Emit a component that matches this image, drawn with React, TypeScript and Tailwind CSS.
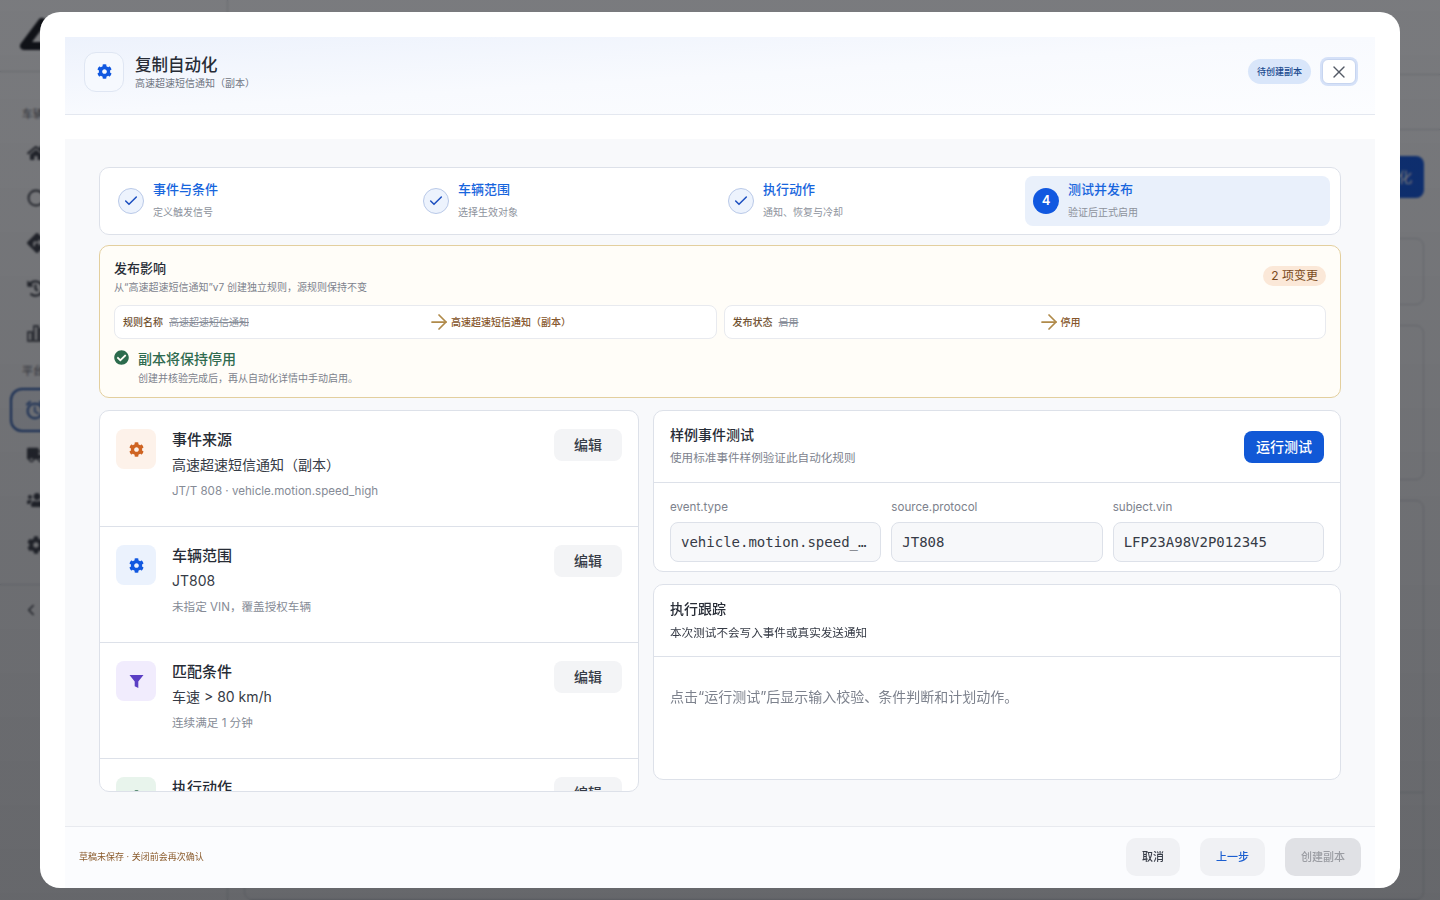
import { FaCheckCircle, FaCog, FaDirections, FaHistory, FaHome, FaTruck, FaUsers } from "react-icons/fa";
import { MdAlarm } from "react-icons/md";
import { ArrowRight, Check, ChevronLeft, Circle, X } from "lucide-react";
import type { ReactNode } from "react";

const fontSans = "font-['Inter','Noto_Sans_CJK_SC',sans-serif]";

const FilterIcon = () => (
  <svg width="15" height="15" viewBox="0 0 15 15" fill="#5b3fc4">
    <path d="M0.5 1h14L9.3 7.6V14L5.7 12.2V7.6Z" />
  </svg>
);

const steps = [
  { title: "事件与条件", sub: "定义触发信号" },
  { title: "车辆范围", sub: "选择生效对象" },
  { title: "执行动作", sub: "通知、恢复与冷却" },
];

const items = [
  {
    title: "事件来源",
    value: "高速超速短信通知（副本）",
    sub: "JT/T 808 · vehicle.motion.speed_high",
    box: "bg-[#fdf2ea]",
    icon: <FaCog className="size-[15px] text-[#cf6422]" />,
  },
  {
    title: "车辆范围",
    value: "JT808",
    sub: "未指定 VIN，覆盖授权车辆",
    box: "bg-[#ebf2fd]",
    icon: <FaCog className="size-[15px] text-[#1158e0]" />,
  },
  {
    title: "匹配条件",
    value: "车速 > 80 km/h",
    sub: "连续满足 1 分钟",
    box: "bg-[#f1ecfd]",
    icon: <FilterIcon />,
  },
  {
    title: "执行动作",
    box: "bg-[#e8f4ec]",
    icon: <FaCog className="size-[15px] text-[#2f6b4f]" />,
  },
];

const fields = [
  { label: "event.type", value: "vehicle.motion.speed_high" },
  { label: "source.protocol", value: "JT808" },
  { label: "subject.vin", value: "LFP23A98V2P012345" },
];

function ChangeRow({ label, from, to }: { label: string; from: string; to: string }) {
  return (
    <div className="flex h-[34px] items-center rounded-lg border border-[#e8eaef] bg-white pl-2 text-[10px]">
      <div className="flex w-[304px] items-center gap-1.5">
        <span className="font-medium text-[#6f5030]">{label}</span>
        <span className="text-[#858b97] line-through">{from}</span>
      </div>
      <ArrowRight className="size-6 text-[#b08a4a]" strokeWidth={1.75} />
      <span className="font-medium text-[#85552a]">{to}</span>
    </div>
  );
}

function RailIcon({ children }: { children: ReactNode }) {
  return <div className="flex h-[45px] items-center pl-[27px] text-[#3c3f47]">{children}</div>;
}

export default function App() {
  return (
    <div className={`${fontSans} relative h-[900px] w-[1440px] overflow-hidden bg-white`}>
      {/* page behind the dialog */}
      <div className="flex h-full">
        <aside className="flex w-[228px] flex-col border-r border-[#d8dade]">
          <div className="flex h-[72px] items-center border-b border-[#d8dade] pl-5">
            <svg width="60" height="36" viewBox="0 0 60 36" fill="none">
              <path d="M22 4 L4 28 H40" stroke="#15171c" strokeWidth="8" strokeLinejoin="round" strokeLinecap="round" />
            </svg>
          </div>
          <div className="mt-[34px] pl-[22px] text-[11px] text-[#5d6068]">车辆</div>
          <div className="mt-2">
            <RailIcon><FaHome className="size-[18px]" /></RailIcon>
            <RailIcon><Circle className="size-[18px]" strokeWidth={2.5} /></RailIcon>
            <RailIcon><FaDirections className="size-5" /></RailIcon>
            <RailIcon><FaHistory className="size-[17px]" /></RailIcon>
            <RailIcon>
              <svg width="18" height="18" viewBox="0 0 18 18" fill="none" stroke="currentColor" strokeWidth="1.6">
                <rect x="1" y="8" width="4" height="9" />
                <rect x="7" y="2" width="4" height="15" />
                <rect x="13" y="5" width="4" height="12" />
              </svg>
            </RailIcon>
          </div>
          <div className="mt-[7px] pl-[22px] text-[11px] text-[#5d6068]">平台</div>
          <div className="ml-[10px] mt-[9px] flex h-[44px] w-[200px] shrink-0 items-center rounded-xl border-2 border-[#1c4fa8] bg-[#1c4fa8]/5 pl-[12px] text-[#1c4fa8]">
            <MdAlarm className="size-[22px]" />
          </div>
          <RailIcon><FaTruck className="size-[18px]" /></RailIcon>
          <RailIcon><FaUsers className="size-5" /></RailIcon>
          <RailIcon><FaCog className="size-[18px]" /></RailIcon>
          <div className="mt-[17px] flex items-center border-t border-[#d8dade] pl-[22px] pt-4 text-[#3c3f47]">
            <ChevronLeft className="size-[18px]" />
          </div>
        </aside>
        <main className="flex-1">
          <div className="h-[75px] border-b border-[#d8dade]" />
          <div className="h-[55px] border-b border-[#d8dade]" />
          <div className="flex flex-col gap-5 px-4 pt-[26px]">
            <div className="mb-[20px] flex justify-end">
              <div className="flex h-[42px] w-[110px] items-center justify-end rounded-lg bg-[#1158e0] pr-3 text-sm text-white">
                化
              </div>
            </div>
            <div className="h-[67px] rounded-lg border border-[#d8dade]" />
            <div className="h-[155px] rounded-lg border border-[#d8dade]" />
            <div className="h-[400px] rounded-lg border border-[#d8dade] pt-[291px]">
              <div className="border-t border-[#d8dade]" />
            </div>
          </div>
        </main>
      </div>

      {/* overlay */}
      <div className="absolute inset-0 bg-gradient-to-b from-[#0c0e14]/55 to-[#0c0e14]/63 backdrop-blur-[1px]" />

      {/* dialog */}
      <div className="absolute left-[40px] top-[12px] flex h-[876px] w-[1360px] flex-col overflow-hidden rounded-[20px] bg-white px-[25px] pt-[25px]">
        <header className="flex h-[78px] shrink-0 items-center justify-between border-b border-[#e4e8f0] bg-gradient-to-br from-[#edf2fc] via-[#f8fafe] to-[#fcfdff] pb-2 pl-[19px] pr-[19px]">
          <div className="flex items-center gap-[11px]">
            <div className="flex size-10 items-center justify-center rounded-xl border border-[#dfe6f3] bg-[#f6f9fe]">
              <FaCog className="size-[15px] text-[#1158e0]" />
            </div>
            <div>
              <div className="pt-[2px] text-[16.5px] font-medium leading-[23px] text-[#272c36]">复制自动化</div>
              <div className="-mt-[2px] text-[10px] leading-[16px] text-[#6f7582]">高速超速短信通知（副本）</div>
            </div>
          </div>
          <div className="flex items-center gap-[11px]">
            <span className="flex h-[25px] items-center rounded-full bg-[#d9e6fa] px-[9px] text-[9px] font-medium text-[#1a4a8f]">
              待创建副本
            </span>
            <button className="flex h-[25px] w-[34px] items-center justify-center rounded-md border border-[#c7d5f0] bg-white text-[#545a66] ring-2 ring-[#d5e1f8]">
              <X className="size-5" strokeWidth={1.6} />
            </button>
          </div>
        </header>

        <div className="h-6 shrink-0" />

        <div className="flex min-h-0 flex-1 flex-col gap-[10px] bg-[#f8f9fb] px-[34px] pt-[28px]">
          {/* stepper */}
          <div className="grid h-[68px] shrink-0 grid-cols-[305px_305px_305px_307px] rounded-[10px] border border-[#dde1e9] bg-white p-2">
            {steps.map((s) => (
              <div key={s.title} className="flex items-center gap-[9px] rounded-lg pl-[10px]">
                <div className="flex size-[26px] items-center justify-center rounded-full border border-[#b9c9e8] bg-[#edf3fd] text-[#1c4fc0]">
                  <Check className="size-4" strokeWidth={2.25} />
                </div>
                <div className="pb-[5px]">
                  <div className="text-[13px] font-medium leading-5 text-[#1765dd]">{s.title}</div>
                  <div className="mt-[6px] text-[10px] leading-[14px] text-[#8d929c]">{s.sub}</div>
                </div>
              </div>
            ))}
            <div className="ml-[2px] flex items-center gap-[9px] rounded-lg bg-[#e9f0fb] pl-2">
              <div className="flex size-[26px] items-center justify-center rounded-full bg-[#1158e0] text-[13px] font-semibold text-white">
                4
              </div>
              <div className="pb-[5px]">
                <div className="text-[13px] font-medium leading-5 text-[#1765dd]">测试并发布</div>
                <div className="mt-[6px] text-[10px] leading-[14px] text-[#8d929c]">验证后正式启用</div>
              </div>
            </div>
          </div>

          {/* publish impact */}
          <div className="h-[153px] shrink-0 rounded-[10px] border border-[#e3cf9e] bg-[#fffdf8] px-[14px] pt-[13px]">
            <div className="flex items-start justify-between">
              <div>
                <div className="text-[13px] font-medium leading-[18px] text-[#272c36]">发布影响</div>
                <div className="mt-[2px] text-[10px] leading-[16px] text-[#7d828d]">
                  从“高速超速短信通知”v7 创建独立规则，源规则保持不变
                </div>
              </div>
              <span className="mt-[7px] flex h-5 items-center rounded-full bg-[#fbe8d8] px-2 text-[12px] text-[#7a4a20]">
                2 项变更
              </span>
            </div>
            <div className="mt-[10px] grid grid-cols-2 gap-[7px]">
              <ChangeRow label="规则名称" from="高速超速短信通知" to="高速超速短信通知（副本）" />
              <ChangeRow label="发布状态" from="启用" to="停用" />
            </div>
            <div className="mt-[10px] flex gap-[9px]">
              <FaCheckCircle className="mt-[1px] size-[15px] text-[#2c6b4d]" />
              <div>
                <div className="text-[14px] font-medium leading-5 text-[#2f6b4f]">副本将保持停用</div>
                <div className="mt-[1px] text-[10px] leading-[16px] text-[#7d828d]">
                  创建并核验完成后，再从自动化详情中手动启用。
                </div>
              </div>
            </div>
          </div>

          {/* checks + test */}
          <div className="mt-[2px] flex gap-[14px]">
            <div className="h-[382px] w-[540px] shrink-0 overflow-hidden rounded-[10px] border border-[#dde1e9] bg-white">
              {items.map((it) => (
                <div key={it.title} className="flex h-[116px] shrink-0 gap-4 border-b border-[#dde1e9] px-4 pt-[18px]">
                  <div className={`flex size-10 shrink-0 items-center justify-center rounded-lg ${it.box}`}>{it.icon}</div>
                  <div className="flex-1">
                    <div className="pt-[1px] text-[15px] font-medium leading-5 text-[#272c36]">{it.title}</div>
                    {it.value && <div className="mt-[5px] text-[14px] leading-5 text-[#363b46]">{it.value}</div>}
                    {it.sub && <div className="mt-[6px] text-[11.6px] leading-5 text-[#868b96]">{it.sub}</div>}
                  </div>
                  <button className="h-8 w-[68px] rounded-lg bg-[#f3f4f6] pb-[2px] text-[14px] font-medium text-[#363b46]">
                    编辑
                  </button>
                </div>
              ))}
            </div>

            <div className="flex min-w-0 flex-1 flex-col gap-3">
              <div className="h-[162px] rounded-[10px] border border-[#dde1e9] bg-white">
                <div className="flex h-[72px] items-center justify-between border-b border-[#dde1e9] px-4">
                  <div className="pb-[3px]">
                    <div className="pt-[1px] text-[14px] font-medium leading-5 text-[#272c36]">样例事件测试</div>
                    <div className="mt-[4px] text-[11.6px] leading-[18px] text-[#7d828d]">使用标准事件样例验证此自动化规则</div>
                  </div>
                  <button className="h-8 w-20 rounded-lg bg-[#1158d6] text-[14px] font-medium text-white">运行测试</button>
                </div>
                <div className="grid grid-cols-3 gap-[10px] px-4 pt-[15px]">
                  {fields.map((f) => (
                    <div key={f.label} className="min-w-0">
                      <div className="text-[11.6px] leading-[18px] text-[#7d828d]">{f.label}</div>
                      <div className="mt-[6px] flex h-10 items-center rounded-lg border border-[#dde1e9] bg-[#f7f8fa] px-[10px] font-['DejaVu_Sans_Mono',monospace] text-[14px] text-[#363b46]">
                        <span className="truncate">{f.value}</span>
                      </div>
                    </div>
                  ))}
                </div>
              </div>
              <div className="h-[196px] rounded-[10px] border border-[#dde1e9] bg-white">
                <div className="h-[72px] border-b border-[#dde1e9] px-4 pt-[14px]">
                  <div className="text-[14px] font-medium leading-5 text-[#272c36]">执行跟踪</div>
                  <div className="mt-[5px] text-[11.6px] leading-[18px] text-[#363b46]">本次测试不会写入事件或真实发送通知</div>
                </div>
                <div className="px-4 pt-[30px] text-[14px] leading-5 text-[#7d828d]">
                  点击“运行测试”后显示输入校验、条件判断和计划动作。
                </div>
              </div>
            </div>
          </div>
        </div>

        {/* footer */}
        <footer className="flex h-[62px] shrink-0 items-center justify-between border-t border-[#e8eaef] bg-[#fbfcfe] px-[14px] pb-[2px]">
          <span className="text-[9px] text-[#8a5a2b]">草稿未保存 · 关闭前会再次确认</span>
          <div className="flex gap-5">
            <button className="h-[38px] w-[54px] rounded-[10px] bg-[#f0f1f4] pt-[2px] text-[11px] font-medium text-[#363b46]">取消</button>
            <button className="h-[38px] w-[65px] rounded-[10px] bg-[#f0f1f4] pt-[2px] text-[11px] font-medium text-[#1c5fd0]">上一步</button>
            <button className="h-[38px] w-[76px] rounded-[10px] bg-[#e0e1e5] pt-[2px] text-[11px] font-medium text-[#9b9da3]">创建副本</button>
          </div>
        </footer>
      </div>
    </div>
  );
}
